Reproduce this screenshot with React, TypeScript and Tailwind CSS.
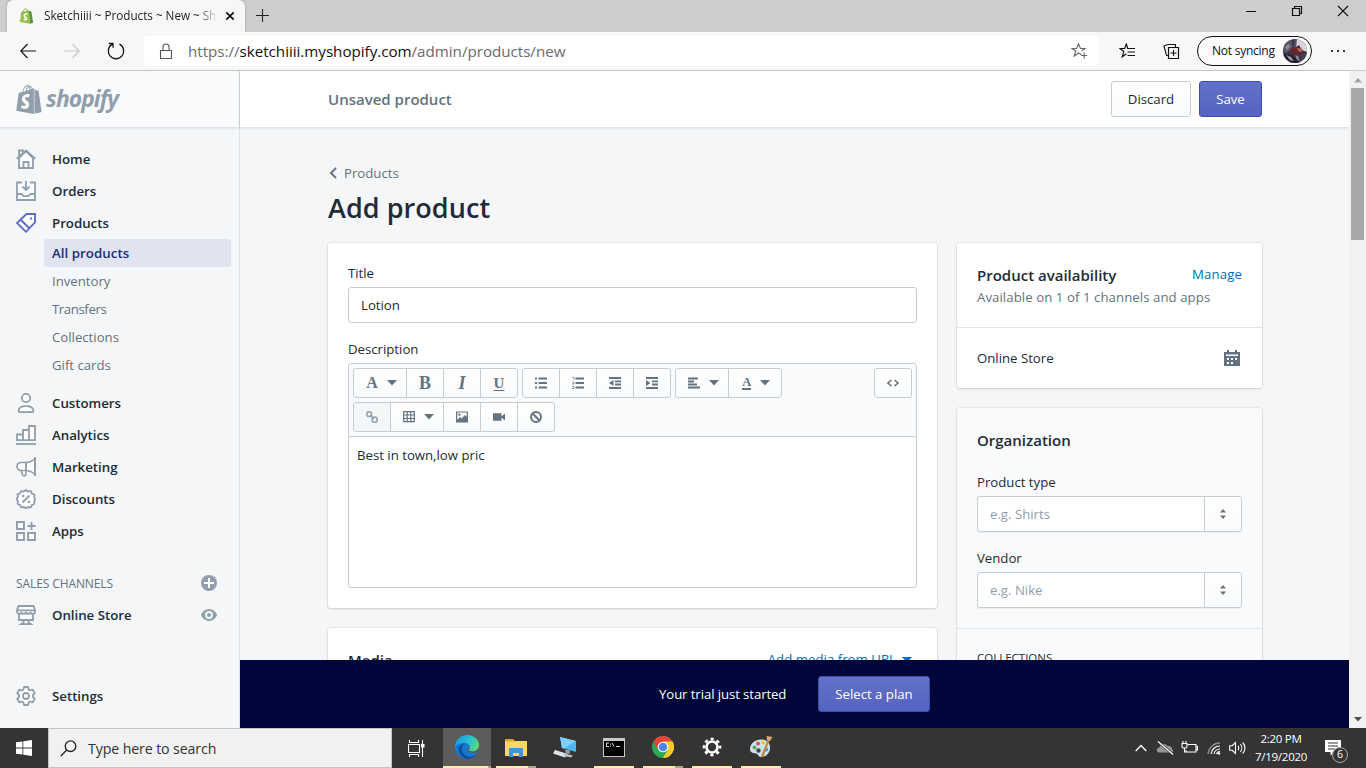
import React from "react";
import { FaShopify } from "react-icons/fa";

type P = { children?: React.ReactNode; className?: string };

function Svg({ s = 20, w, h, vb, children, className = "" }: P & { s?: number; w?: number; h?: number; vb?: string }) {
  const ww = w ?? s;
  const hh = h ?? s;
  return (
    <svg width={ww} height={hh} viewBox={vb ?? `0 0 ${ww} ${hh}`} fill="none" className={"shrink-0 " + className}>
      {children}
    </svg>
  );
}

/* ---------- Browser chrome ---------- */

function TabStrip() {
  return (
    <div className="flex h-8 shrink-0 items-start bg-[#cdcdcd] pl-[7px]">
      <div className="flex h-8 w-[238px] items-center rounded-t-[6px] bg-[#f7f7f7] pl-3 shadow-[0_0_2px_rgba(0,0,0,0.35)]">
        <Svg s={16}>
          <path d="M2.2 4l7.6-1.4L11 15.7 1 14z" fill="#95bf47" />
          <path d="M9.8 2.6l2.6 1.2 1.8 10.9L11 15.700z" fill="#5e8e3e" />
          <path d="M4 4c.3-2 1.700-3.500 3-3.200 1 .2 1.500 1.500 1.500 2.500" stroke="#7aa83c" strokeWidth="0.900" />
          <path d="M8.400 6.300c-2-.8-3.300.2-3.200 1.400.1 1.700 2.500 1.600 2.400 3.100-.1 1.300-1.800 1.300-3 .4" stroke="#fff" strokeWidth="1.500" />
        </Svg>
        <span className="ml-[9px] w-[174px] overflow-hidden whitespace-nowrap bg-gradient-to-r from-[#1c1c1c] from-88% to-[#1c1c1c00] bg-clip-text text-[11.7px] tracking-[-0.01px] text-transparent">
          Sketchiiii ~ Products ~ New ~ Sh
        </span>
        <Svg s={10} className="ml-[7px]">
          <path d="M1.300 1.300l7.400 7.400M8.700 1.300L1.300 8.700" stroke="#111" strokeWidth="1.700" />
        </Svg>
      </div>
      <Svg s={14} className="ml-[10px] mt-[8px]">
        <path d="M7.500 1v13M1 7.500h13" stroke="#222" strokeWidth="1.100" />
      </Svg>
      <div className="ml-auto flex items-center pt-[5px]">
        <Svg s={12} className="mr-[34px]"><path d="M1 6.500h10" stroke="#111" /></Svg>
        <Svg s={12} className="mr-[34px]">
          <path d="M1.500 3.500h7v7h-7zM3.500 3.500v-2h7v7h-2" stroke="#111" strokeWidth="1.200" />
        </Svg>
        <Svg s={12} className="mr-[17px]"><path d="M1 1l10 10M11 1L1 11" stroke="#111" strokeWidth="1.100" /></Svg>
      </div>
    </div>
  );
}

function Avatar() {
  return (
    <Svg s={24}>
      <defs>
        <clipPath id="av"><circle cx="12" cy="12" r="12" /></clipPath>
      </defs>
      <g clipPath="url(#av)">
        <rect width="24" height="24" fill="#3b3347" />
        <path d="M12 0h12v13l-5-2-3-5-3 2z" fill="#d9d5dc" />
        <path d="M0 3l8-3 2 8-6 6-4-2z" fill="#5c566a" />
        <path d="M11 0h3l-1 9h-2z" fill="#55505e" />
        <path d="M7 11l6-3 6 2 2 4-7 1-6 0z" fill="#6b2229" />
        <path d="M14 9l4 .5 2 2.500-4 1z" fill="#b26c58" />
        <path d="M0 15l9 1 9 8H0z" fill="#241f2d" />
        <path d="M3 16l5 2 3 4-4-1z" fill="#a39dab" />
        <path d="M12 16l3 1 2 5-3-1z" fill="#8d8696" />
        <path d="M17 16l7-2v8l-4 2z" fill="#474158" />
        <path d="M2 8l4-3 1 3-3 3z" fill="#8f8a9a" />
      </g>
    </Svg>
  );
}

function AddressRow() {
  return (
    <div className="flex h-[39px] shrink-0 items-center border-b border-[#cbcbcb] bg-[#f7f7f7] pl-5">
      <Svg w={16} h={16}><path d="M7.500 1L.8 8l6.700 7M1 8h15" stroke="#151515" strokeWidth="1.200" /></Svg>
      <Svg w={16} h={16} className="ml-7"><path d="M8.500 1l6.700 7-6.700 7M15 8H0" stroke="#c9c9c9" strokeWidth="1.200" /></Svg>
      <Svg s={18} className="ml-[27px]">
        <path d="M5.500 2.200A7.700 7.700 0 1 0 12.500 2.200M1.800 1.500h4.200v4.300" stroke="#151515" strokeWidth="1.300" />
      </Svg>
      <div className="ml-[19px] flex h-[30px] w-[955px] items-center rounded-[4px] bg-white pl-[15px]">
        <Svg w={14} h={17}>
          <path d="M1.500 7.500h11v8h-11zM4 7V4a3 3 0 0 1 6 0v3" stroke="#555" strokeWidth="1.100" />
        </Svg>
        <span className="ml-[15px] whitespace-nowrap text-[15.2px] tracking-[-0.03px] text-[#6b6b6b]">
          https://<span className="text-[#111]">sketchiiii.myshopify.com</span>/admin/products/new
        </span>
        <Svg s={17} className="ml-auto mr-[11px]">
          <path d="M10.500 11.800L7.500 10l-4.300 3.200 1.500-5.200L1 5.500h4.600L7.500.8l2 4.700H14L10.800 8" stroke="#666" strokeWidth="1.100" />
          <path d="M13.200 9.500v6M10.200 12.500h6" stroke="#666" strokeWidth="1.100" />
        </Svg>
      </div>
      <Svg s={17} className="ml-[20px]">
        <path d="M8.800 5.500L7.300 1 5.700 5.500H1L4.800 8.500 3.300 13.700 7.500 10.800" stroke="#111" strokeWidth="1.200" />
        <path d="M8.300 5.500H16M8.500 9h7.500M8.500 12.500H16" stroke="#111" strokeWidth="1.200" />
      </Svg>
      <Svg s={17} className="ml-[27px]">
        <path d="M5.500 4.500h10v11h-10z" stroke="#111" strokeWidth="1.200" />
        <path d="M10.500 7v6M7.500 10h6M12.500 4.500V1.500H4.200M4.500 1.500L1 3l2.500 9.500h2" stroke="#111" strokeWidth="1.100" />
      </Svg>
      <div className="ml-[17px] flex h-[30px] w-[115px] items-center rounded-full border border-[#111] bg-[#fbfbfb] pl-[14px]">
        <span className="w-[71px] whitespace-nowrap text-[12px] tracking-[-0.24px] text-[#111]">Not syncing</span>
        <Avatar />
      </div>
      <Svg w={16} h={4} className="ml-[18px]">
        <path d="M1 1h2v2H1zM7 1h2v2H7zM13 1h2v2h-2z" fill="#333" />
      </Svg>
    </div>
  );
}

/* ---------- Sidebar ---------- */

const G = "#919eab";

const icons: Record<string, React.ReactNode> = {
  Home: (
    <g stroke={G} strokeWidth="1.800">
      <path d="M3 9v10h14V9L10 2z" fill="#fff" /><path d="M.7 9.700L10 1.500l9.300 8.200M3 7.500v-6h4v2M7.500 19v-6h5v6" />
    </g>
  ),
  Orders: (
    <g stroke={G} strokeWidth="1.800">
      <path d="M6 1.500H1v17.500h18V1.500h-5" fill="#fbfcfd" /><path d="M1 13h4.500l2 2.200h5l2-2.200H19M10 0v8.500M6.500 5.500L10 9l3.500-3.500" />
    </g>
  ),
  Products: (
    <g stroke="#5c6ac4" strokeWidth="1.800">
      <path d="M10.500 1H19v8.500l-9 9.300L1 10z" fill="#fff" /><path d="M4.500 6.500l9 9" /><path d="M14.100 4.500h1.900v1.900h-1.900z" fill="#5c6ac4" stroke="none" />
    </g>
  ),
  Customers: (
    <g stroke={G} strokeWidth="1.800">
      <circle cx="10" cy="5" r="4.200" fill="#fff" /><path d="M2.600 18.200c0-3.700 3-5 7.400-5s7.400 1.300 7.400 5c0 .5-.3.900-1 .9H3.600c-.7 0-1-.4-1-.9z" fill="#fff" />
    </g>
  ),
  Analytics: (
    <g stroke={G} strokeWidth="1.800">
      <path d="M1 9.500h6v5.700H1zM7 5h6v10.200H7zM13 1h6v14.200h-6z" fill="#fff" /><path d="M0 19h20" />
    </g>
  ),
  Marketing: (
    <g stroke={G} strokeWidth="1.700" strokeLinejoin="round">
      <path d="M5 5.500h5c4 0 7-2 9-4v16c-2-2-5-4-9-4H5a4 4 0 0 1 0-8zM10 5.500v8M5 13.500l1.500 4.300c.5 1.300 3 1.500 3.200 0L10 13.500" fill="#fff" /><path d="M10 5.500v8M19 0v19" />
    </g>
  ),
  Discounts: (
    <g stroke={G} strokeWidth="1.800">
      <path d="M10 .9l2.200 1.600 2.700-.3 1.100 2.500 2.500 1.100-.3 2.700L19.300 10l-1.200 2.200.3 2.500-2.400 1.200-1.200 2.400-2.600-.3L10 19.200 7.800 18l-2.600.3L4 15.900l-2.400-1.200.3-2.500L.7 10l1.200-2.200-.3-2.300L4 4.300l1.200-2.100 2.600.300z" fill="#fff" />
      <path d="M6.500 13.500l7-7" /><circle cx="7.200" cy="7" r="1.300" fill={G} stroke="none" /><circle cx="12.900" cy="13" r="1.300" fill={G} stroke="none" />
    </g>
  ),
  Apps: (
    <g stroke={G} strokeWidth="1.900">
      <path d="M1 1h7v7H1zM1 12h7v7H1zM12 12h7v7h-7z" fill="#fff" /><path d="M15.500 1v8M11.500 5h8" />
    </g>
  ),
  "Online Store": (
    <g stroke={G} strokeWidth="1.800">
      <path d="M3 8v7h14V8" fill="#fff" />
      <path d="M2.500 1h15L19 5.200v1.600c0 1-1 2-2.200 2s-2.200-1-2.200-2c0 1-1 2-2.300 2s-2.300-1-2.300-2c0 1-1 2-2.300 2s-2.300-1-2.300-2c0 1-1 2-2.200 2S1 7.800 1 6.800V5.200z" fill="#fff" />
      <path d="M1 5.300h18M7.500 15v2.500L5 19.200h10l-2.500-1.700V15" />
    </g>
  ),
  Settings: (
    <g stroke={G} strokeWidth="1.800" strokeLinejoin="round">
      <path d="M8 1h4l.6 2.700 1.500.8 2.700-.8 2 3.400-1.900 1.900v2l1.900 1.900-2 3.400-2.700-.8-1.500.8L12 19H8l-.6-2.700-1.500-.8-2.700.8-2-3.400L3.100 11V9L1.200 7.100l2-3.400 2.700.800 1.500-.8z" fill="#fff" />
      <circle cx="10" cy="10" r="3" />
    </g>
  ),
};

function NavItem({ name, children }: { name: string; children?: React.ReactNode }) {
  return (
    <div className="flex h-8 shrink-0 items-center pl-4 pr-[22px]">
      <Svg>{icons[name]}</Svg>
      <span className="ml-4 flex-1 whitespace-nowrap pt-0.5 text-[13.3px] font-[560] tracking-[-0.03px] text-[#212b36]">{name}</span>
      {children}
    </div>
  );
}

function SubItem({ t = "", children }: P & { t?: string }) {
  return <div className={"flex h-7 shrink-0 items-center pl-[52px] pt-0.5 text-[13.2px] text-[#637381] " + t}>{children}</div>;
}

function Sidebar() {
  return (
    <div className="flex w-[240px] shrink-0 flex-col border-r border-[#dfe3e8] bg-[#f4f6f8]">
      <div className="flex h-14 shrink-0 items-center bg-[#f9fafb] pl-4 shadow-[0_1px_3px_rgba(33,43,54,0.15)]">
        <FaShopify className="h-[31px] w-[26px] shrink-0 text-[#919eab]" />
        <span className="ml-[4px] text-[22.8px] font-bold italic tracking-[-0.9px] text-[#919eab]">shopify</span>
      </div>
      <div className="h-4 shrink-0" />
      <NavItem name="Home" />
      <NavItem name="Orders" />
      <NavItem name="Products" />
      <div className="ml-[44px] mr-2 flex h-7 shrink-0 items-center rounded-[3px] bg-[#e0e3f0] pl-2 pt-0.5 text-[13.3px] font-[560] tracking-[0.03px] text-[#202e78]">
        All products
      </div>
      <SubItem>Inventory</SubItem>
      <SubItem t="tracking-[-0.4px]">Transfers</SubItem>
      <SubItem>Collections</SubItem>
      <SubItem>Gift cards</SubItem>
      <div className="h-2 shrink-0" />
      <NavItem name="Customers" />
      <NavItem name="Analytics" />
      <NavItem name="Marketing" />
      <NavItem name="Discounts" />
      <NavItem name="Apps" />
      <div className="mt-5 flex h-8 shrink-0 items-center justify-between pl-4 pr-[22px]">
        <span className="pt-0.5 text-[12px] font-[450] tracking-[-0.1px] text-[#637381]">SALES CHANNELS</span>
        <Svg s={16}>
          <circle cx="8" cy="8" r="8" fill={G} /><path d="M8 3v10M3 8h10" stroke="#fff" strokeWidth="1.900" />
        </Svg>
      </div>
      <NavItem name="Online Store">
        <Svg w={16} h={12}>
          <path d="M8 0C3 0 .3 4.500 0 6c.3 1.500 3 6 8 6s7.700-4.500 8-6c-.3-1.500-3-6-8-6z" fill={G} />
          <circle cx="8" cy="6" r="3.900" fill="#f4f6f8" /><circle cx="8" cy="6" r="2" fill={G} />
        </Svg>
      </NavItem>
      <div className="mt-auto pb-4"><NavItem name="Settings" /></div>
    </div>
  );
}

/* ---------- Editor ---------- */

const K = "#637381";

function Caret({ fill = K }: { fill?: string }) {
  return <Svg w={10} h={6}><path d="M0 0h10L5 5.500z" fill={fill} /></Svg>;
}

function Group({ children }: P) {
  return (
    <div className="flex h-[30px] divide-x divide-[#c4cdd5] overflow-hidden rounded-[3px] border border-[#c4cdd5] bg-gradient-to-b from-white to-[#f9fafb] text-[#637381]">
      {children}
    </div>
  );
}

function Tool({ wide, off, children }: P & { wide?: boolean; off?: boolean }) {
  return (
    <div className={"flex items-center justify-center " + (wide ? "w-[53px] gap-[9px] pl-[3px] " : "w-[37px] last:w-9 ") + (off ? "bg-[#f4f6f8]" : "")}>
      {children}
    </div>
  );
}

const serif = "font-['Liberation_Serif',serif] leading-none ";

function Indent({ out }: { out?: boolean }) {
  return (
    <Svg w={12} h={12}>
      <path d="M0 1h12M6 4.300h6M6 7.500h6M0 11h12" stroke={K} strokeWidth="1.800" />
      <path d={out ? "M4.500 3v6L0 6z" : "M0 3v6l4.500-3z"} fill={K} />
    </Svg>
  );
}

function Toolbar() {
  return (
    <div className="flex h-[73px] shrink-0 flex-col gap-1 border-b border-[#c4cdd5] bg-[#f9fafb] px-1 pt-1">
      <div className="flex gap-1">
        <Group>
          <Tool wide><span className={serif + "text-[16px] font-bold"}>A</span><Caret /></Tool>
          <Tool><span className={serif + "text-[18px] font-bold"}>B</span></Tool>
          <Tool><span className={serif + "text-[18px] font-bold italic"}>I</span></Tool>
          <Tool><span className={serif + "text-[15px] font-bold underline underline-offset-2"}>U</span></Tool>
        </Group>
        <Group>
          <Tool>
            <Svg s={12}><path d="M3.500 1.500H12M3.500 6H12M3.500 10.500H12" stroke={K} strokeWidth="1.800" /><path d="M0 .6h2v2H0zM0 5h2v2H0zM0 9.500h2v2H0z" fill={K} /></Svg>
          </Tool>
          <Tool>
            <Svg s={12}><path d="M3.500 1.500H12M3.500 6H12M3.500 10.500H12" stroke={K} strokeWidth="1.800" /><path d="M.5.500H2v2.500M.3 5h1.500v1.200L.5 7h1.700M.3 9.500h1.500v2H.3" stroke={K} strokeWidth=".8" /></Svg>
          </Tool>
          <Tool><Indent out /></Tool>
          <Tool><Indent /></Tool>
        </Group>
        <div className="flex h-[30px] w-[107px] divide-x divide-[#c4cdd5] overflow-hidden rounded-[3px] border border-[#c4cdd5] bg-gradient-to-b from-white to-[#f9fafb] text-[#637381]">
          <Tool wide>
            <Svg s={12}><path d="M0 1.500h10M0 4.500h6M0 7.500h9M0 10.500h12" stroke={K} strokeWidth="1.800" /></Svg><Caret />
          </Tool>
          <Tool wide>
            <span className={serif + "border-b-2 border-[#637381] text-[12.500px] font-bold"}>A</span><Caret />
          </Tool>
        </div>
        <div className="ml-auto">
          <Group><Tool><Svg w={12} h={8}><path d="M4.500 1L1 4l3.500 3M7.500 1L11 4 7.500 7" stroke={K} strokeWidth="1.500" /></Svg></Tool></Group>
        </div>
      </div>
      <div className="flex">
        <Group>
          <Tool off>
            <Svg s={12}>
              <circle cx="3.200" cy="3.200" r="2.400" stroke={G} strokeWidth="1.500" /><circle cx="8.700" cy="8.700" r="2.600" stroke={G} strokeWidth="1.500" /><path d="M4 4l4 4" stroke={G} strokeWidth="1.500" />
            </Svg>
          </Tool>
          <Tool wide>
            <Svg s={12}><path d="M.7.700h10.600v10H.7zM0 4h12M0 7.500h12M4.200 0v11M7.800 0v11" stroke={K} strokeWidth="1.200" /></Svg><Caret />
          </Tool>
          <Tool>
            <Svg s={12}><path d="M.6 1h10.800v10H.6z" stroke={K} strokeWidth="1.200" /><circle cx="3.300" cy="3.600" r="1.200" fill={K} /><path d="M1 11V9l3-3 1.500 1.500L9 4l2.500 2.500V11z" fill={K} /></Svg>
          </Tool>
          <Tool>
            <Svg s={12}><path d="M0 2.200h8.500v3L12 2.500v7L8.500 6.800v3H0z" fill={K} /></Svg>
          </Tool>
          <Tool>
            <Svg s={12}><circle cx="6" cy="6" r="5" stroke={K} strokeWidth="1.900" /><path d="M2.500 2.500l7 7" stroke={K} strokeWidth="1.900" /></Svg>
          </Tool>
        </Group>
      </div>
    </div>
  );
}

/* ---------- Page ---------- */

const card = "rounded-[3px] shadow-[0_0_0_1px_rgba(63,63,68,0.06),0_1px_3px_rgba(63,63,68,0.16)] ";

function Combo({ text }: { text: string }) {
  return (
    <div className="flex h-9 rounded-[3px] border border-[#c4cdd5] bg-white shadow-[0_1px_0_rgba(22,29,37,0.05)]">
      <span className="flex flex-1 items-center pl-3 pt-0.5 text-[13.200px] text-[#919eab]">{text}</span>
      <div className="flex w-[37px] items-center justify-center rounded-r-[3px] border-l border-[#c4cdd5] bg-gradient-to-b from-white to-[#f9fafb]">
        <Svg w={6} h={10}><path d="M0 3.500L3 0l3 3.500zM0 6.500L3 10l3-3.500z" fill={K} /></Svg>
      </div>
    </div>
  );
}

const primary = "flex h-9 items-center justify-center rounded-[3px] border border-[#3f4eae] bg-gradient-to-b from-[#6371c7] to-[#5563c1] pt-0.5 text-[13.2px] text-white ";

function Main() {
  return (
    <div className="flex w-[1109px] shrink-0 flex-col bg-[#f4f6f8]">
      <div className="flex h-14 shrink-0 items-center bg-white pl-[88px] pr-[87px] shadow-[0_1px_3px_rgba(33,43,54,0.15)]">
        <span className="flex-1 text-[15px] font-[560] text-[#637381]">Unsaved product</span>
        <div className="mr-2 flex h-9 w-20 items-center justify-center rounded-[3px] border border-[#c4cdd5] bg-gradient-to-b from-white to-[#f9fafb] pt-0.5 text-[13.2px] text-[#212b36]">Discard</div>
        <div className={primary + "w-[63px]"}>Save</div>
      </div>
      <div className="h-[533px] shrink-0 overflow-hidden pl-[88px] pr-[87px] pt-9">
        <div className="flex h-5 items-center text-[13.2px] text-[#637381]">
          <Svg w={12} h={12} className="mr-[4px]"><path d="M8 .8L3 6l5 5.200" stroke={K} strokeWidth="1.900" /></Svg>
          <span className="pt-0.5">Products</span>
        </div>
        <div className="mt-[9px] flex h-8 items-center text-[27px] font-[560] tracking-[0.06px] text-[#212b36]">Add product</div>
        <div className="mt-[19px] flex items-start gap-5">
          <div className="flex w-[609px] flex-col gap-5">
            <div className={card + "flex h-[365px] flex-col bg-white px-5 pt-5 text-[13.200px] text-[#212b36]"}>
              <div className="flex h-5 items-center pt-0.5">Title</div>
              <div className="mt-1 flex h-9 shrink-0 items-center rounded-[3px] border border-[#c4cdd5] pl-3 pt-0.5">Lotion</div>
              <div className="mt-4 flex h-5 items-center pt-0.5">Description</div>
              <div className="mt-1 flex h-[225px] flex-col overflow-hidden rounded-[3px] border border-[#c4cdd5]">
                <Toolbar />
                <div className="flex h-9 items-center pl-2 pt-0.5">Best in town,low pric</div>
              </div>
            </div>
            <div className={card + "flex h-[200px] justify-between bg-white px-5 pt-5"}>
              <div className="flex h-6 items-center text-[15px] font-[560] text-[#212b36]">Media</div>
              <div className="flex h-6 items-center gap-[6px] pr-[5px] text-[13.200px] tracking-[0.03px] text-[#006fbb]">Add media from URL <Caret fill="#006fbb" /></div>
            </div>
          </div>
          <div className="flex flex-1 flex-col gap-5">
            <div className={card + "h-[145px] bg-white text-[13.200px] text-[#212b36]"}>
              <div className="h-[85px] border-b border-[#dfe3e8] px-5 pt-5">
                <div className="flex h-6 items-center">
                  <span className="flex-1 text-[15px] font-[560]">Product availability</span>
                  <span className="tracking-[0.15px] text-[#006fbb]">Manage</span>
                </div>
                <div className="flex h-5 items-center whitespace-nowrap pt-0.5 tracking-[0.07px] text-[#637381]">Available on 1 of 1 channels and apps</div>
              </div>
              <div className="flex h-[60px] items-center justify-between pl-5 pr-[22px]">
                <span className="pt-0.5">Online Store</span>
                <Svg s={16}>
                  <path d="M0 2h3V0h2v2h6V0h2v2h3v14H0z" fill={K} />
                  <path d="M2 4.500h12v1.500H2zM3 8h2v2H3zM7 8h2v2H7zM11 8h2v2h-2zM3 12h2v2H3zM7 12h2v2H7z" fill="#fff" />
                </Svg>
              </div>
            </div>
            <div className={card + "h-[340px] bg-[#f9fafb] text-[13.200px] text-[#212b36]"}>
              <div className="h-[221px] border-b border-[#dfe3e8] px-5 pt-5">
                <div className="flex h-6 items-center text-[15px] font-[560]">Organization</div>
                <div className="mt-5 flex h-5 items-center pt-0.5">Product type</div>
                <div className="mt-1"><Combo text="e.g. Shirts" /></div>
                <div className="mt-4 flex h-5 items-center pt-0.5">Vendor</div>
                <div className="mt-1"><Combo text="e.g. Nike" /></div>
              </div>
              <div className="px-5 pt-5 text-[11.500px] font-[450] leading-[17px]">COLLECTIONS</div>
            </div>
          </div>
        </div>
      </div>
      <div className="flex h-[68px] shrink-0 items-center bg-[#000639] pl-[419px] text-[13.200px] text-white">
        <span className="w-[159px] whitespace-nowrap pt-0.5 tracking-[-0.09px]">Your trial just started</span>
        <div className={primary + "w-28"}>Select a plan</div>
      </div>
    </div>
  );
}

function Scrollbar() {
  return (
    <div className="flex w-[17px] shrink-0 flex-col items-center bg-[#f1f1f1]">
      <Svg w={8} h={5} className="mt-[7px]"><path d="M4 0l4 4.500H0z" fill="#a3a3a3" /></Svg>
      <div className="mt-[5px] h-[152px] w-[13px] bg-[#a8a8a8]" />
      <Svg w={8} h={5} className="mb-[6px] mt-auto"><path d="M4 4.500l4-4.500H0z" fill="#505050" /></Svg>
    </div>
  );
}

/* ---------- Taskbar ---------- */

function Task({ bar = "", className = "", children }: P & { bar?: string }) {
  return (
    <div className={"flex h-10 w-[49px] shrink-0 flex-col items-center " + className}>
      <div className="flex h-[38px] items-center">{children}</div>
      <div className={"h-[2px] " + bar} />
    </div>
  );
}

const Y = "bg-[#fbeeaa] w-10 ";

function Taskbar() {
  return (
    <div className="flex h-10 shrink-0 items-center bg-[#353433] text-white">
      <div className="flex w-12 justify-center">
        <Svg s={16}><path d="M0 2.300L6.500 1.400v6.200H0zM7.300 1.300L16 0v7.600H7.300zM0 8.400h6.500v6.200L0 13.700zM7.300 8.400H16V16l-8.700-1.300z" fill="#fff" /></Svg>
      </div>
      <div className="flex h-10 w-[344px] items-center border border-[#c4c4c4] bg-[#f1f1f1] pl-[11px]">
        <Svg s={17}><circle cx="10.500" cy="6.200" r="5.300" stroke="#222" strokeWidth="1.300" /><path d="M6.700 10L.8 16" stroke="#222" strokeWidth="1.300" /></Svg>
        <span className="ml-[11px] pt-0.5 text-[14.200px] tracking-[-0.12px] text-[#333]">Type here to search</span>
      </div>
      <div className="flex w-[51px] justify-center pr-[2px]">
        <Svg s={17}>
          <path d="M1.500 0v2.500h9V0M1.500 17v-2.500h9V17M.5 4.500h11v8H.5zM14.500 0v17" stroke="#fff" strokeWidth="1.100" /><path d="M13 4h3.500v3.500H13z" fill="#fff" />
        </Svg>
      </div>
      <div className="flex h-10 w-12 flex-col bg-[#5d5c5b]">
        <div className="flex h-[38px] items-center justify-center">
          <Svg s={24}>
            <defs>
              <linearGradient id="eg" x1="2" y1="3" x2="24" y2="12" gradientUnits="userSpaceOnUse"><stop stopColor="#1c9de0" /><stop offset=".55" stopColor="#2bc3d2" /><stop offset="1" stopColor="#66dc62" /></linearGradient>
            </defs>
            <circle cx="12" cy="12" r="12" fill="#1677cf" />
            <path d="M0 12C.3 5 5.500 0 12 0c7 0 12 4.500 12 10 0 4-3 6.500-6.500 6.500-2.500 0-4-1-3.500-2 2-3 0-6.500-4.500-6.500C5 8 1.500 9.500 0 12z" fill="url(#eg)" />
            <path d="M10 8c-4 2-5.500 10 2 13 3.500 1.500 7 .5 10-2.500a12 12 0 0 1-9 5.500C7 23 3.500 19 4 14c.3-3 3-6 6-6z" fill="#124d9b" />
            <path d="M12 12.500c0 3.500 3.500 6.500 9.500 5.200l2.500-.700V12c-1 3-4 4.500-6.500 4.500-2.500 0-4-.8-3.500-2 .5-.9.600-1.800 0-2.800z" fill="#5d5c5b" />
          </Svg>
        </div>
        <div className="flex h-[2px]"><div className="w-[45px] bg-[#fbeeaa]" /><div className="flex-1 bg-[#aaa489]" /></div>
      </div>
      <Task bar={Y + "border-r-8 border-[#aaa489]"}>
        <Svg w={22} h={20}>
          <path d="M0 2h8l2 2v15H0z" fill="#d99a26" /><path d="M0 4h22v15H0z" fill="#fbd66a" /><path d="M1 3h8v1.500H1z" fill="#f0a91f" />
          <path d="M4 11h14v9h-4v-4H8v4H4z" fill="#3f96d2" />
        </Svg>
      </Task>
      <Task>
        <Svg w={24} h={22}>
          <path d="M7 1l16 4v11L9 12z" fill="#4fb5ef" /><path d="M7 1l16 4-12.500 7.500L9 12z" fill="#7fd0fb" /><path d="M12 13.500l5 1v3h-4z" fill="#9aa2a8" />
          <path d="M2 14l13 4-3 3.500L0 17.500z" fill="#dfe3e6" /><path d="M11 17.500l9 2-2 2-7-1.500z" fill="#b7bec4" />
        </Svg>
      </Task>
      <Task bar={Y}>
        <Svg w={22} h={19}>
          <rect width="22" height="19" fill="#c9c9c9" /><rect x="1" y="3" width="20" height="15" fill="#000" />
          <path d="M6 5H3.500v3.500H6M7.500 5.500v1M7.500 7.500v1M9 5l2 3.500M13 8.500h4" stroke="#ddd" />
        </Svg>
      </Task>
      <Task bar={Y + "border-r-8 border-[#aaa489]"}>
        <Svg w={22} h={22} vb="0 0 24 24">
          <circle cx="12" cy="12" r="12" fill="#2fa655" />
          <path d="M12 12L1.600 6A12 12 0 0 1 22.400 6z" fill="#e4443a" /><path d="M1.600 6L7 15l5-3V6z" fill="#e4443a" />
          <path d="M22.400 6A12 12 0 0 1 12 24l5.200-9L12 6z" fill="#fbcb2e" /><circle cx="12" cy="12" r="5.800" fill="#fff" /><circle cx="12" cy="12" r="4.700" fill="#4a86ec" />
        </Svg>
      </Task>
      <Task bar={Y}>
        <Svg w={20} h={20}>
          <circle cx="10" cy="10" r="5.500" stroke="#fff" strokeWidth="2.600" />
          <circle cx="10" cy="10" r="8" stroke="#fff" strokeWidth="2.600" strokeDasharray="3.140 3.140" strokeDashoffset="1.570" />
        </Svg>
      </Task>
      <Task bar={Y}>
        <Svg w={24} h={24}>
          <path d="M1 14C1 8 7 4 13 4.500c6 .5 8 4 8 8.500 0 5-4 9-9 9-3 0-2.500-3-5-3.500S1 18 1 14z" fill="#cde3ef" />
          <circle cx="5.500" cy="12.500" r="2" fill="#55a95a" /><circle cx="9" cy="8.500" r="1.900" fill="#d9534a" /><circle cx="14" cy="7.500" r="1.900" fill="#f2c430" /><circle cx="17" cy="14.500" r="2" fill="#3689cf" /><circle cx="9.500" cy="15.500" r="2.200" fill="#454545" />
          <path d="M20 4l-7 18" stroke="#c4843f" strokeWidth="2.200" /><path d="M17.500 1l6 1-2.500 4-3-1z" fill="#dba878" />
        </Svg>
      </Task>
      <div className="ml-auto flex h-10 items-center">
        <Svg w={12} h={8}><path d="M.7 7L6 1.500 11.300 7" stroke="#fff" strokeWidth="1.300" /></Svg>
        <Svg w={18} h={14} className="ml-[9px]">
          <path d="M3 11.500c-3-.5-3-4.500.5-5C4 3 9 1.500 11.500 5c3-.5 5 1 4.500 3.500 1.500.5 1.500 2.500 0 3z" fill="#979797" /><path d="M2 .5l15 13" stroke="#353433" strokeWidth="2.500" /><path d="M2 .5l15 13" stroke="#fff" strokeWidth="1.200" />
        </Svg>
        <Svg w={17} h={14} className="ml-[7px]">
          <path d="M6.500 3.500h8.500v7.500H5V9M15 5.500h1.500v3.500H15" stroke="#fff" strokeWidth="1.100" /><path d="M1 2.500h5v3l-1 1.500H2L1 5.500zM2 0v2.500M5 0v2.500M3.500 7v4H5" stroke="#fff" strokeWidth="1.100" />
        </Svg>
        <Svg w={14} h={14} className="ml-[9px]">
          <path d="M1 13A12 12 0 0 1 13 2" stroke="#8e8e8e" strokeWidth="1.300" /><path d="M4 13a9 9 0 0 1 9-8M7 13a6 6 0 0 1 6-5M9.500 13a3.500 3.500 0 0 1 3.500-2.500" stroke="#fff" strokeWidth="1.200" /><circle cx="12" cy="12.500" r="1.200" fill="#fff" />
        </Svg>
        <Svg w={18} h={14} className="ml-[8px]">
          <path d="M.7 4.700h2.500L6.500 1.500v11L3.200 9.300H.7zM9 5c1 1 1 3 0 4M11.300 3c2 2.300 2 5.700 0 8M13.700 1.500c3 3.200 3 7.800 0 11" stroke="#fff" strokeWidth="1.100" />
        </Svg>
        <div className="ml-[6px] w-[56px] whitespace-nowrap text-center text-[11.500px] leading-[18px] tracking-[-0.25px]">
          <div>2:20 PM</div><div>7/19/2020</div>
        </div>
        <div className="relative ml-[15px] flex h-10 w-[42px] items-center">
          <Svg w={17} h={17} className="-mt-[2px] ml-[1px]"><path d="M0 1h16v12H9l-3.500 3.500V13H0z" fill="#fff" /><path d="M3 4h10M3 7h10M3 10h7" stroke="#353433" /></Svg>
          <span className="absolute left-[8px] top-[19px] flex h-4 w-4 items-center justify-center rounded-full border border-[#aaa] bg-[#353433] text-[10.500px]">6</span>
        </div>
      </div>
    </div>
  );
}

export default function App() {
  return (
    <div className="flex h-[768px] w-[1366px] flex-col overflow-hidden bg-white font-['Open_Sans','Noto_Sans',sans-serif]">
      <TabStrip />
      <AddressRow />
      <div className="flex h-[657px] shrink-0">
        <Sidebar />
        <Main />
        <Scrollbar />
      </div>
      <Taskbar />
    </div>
  );
}
